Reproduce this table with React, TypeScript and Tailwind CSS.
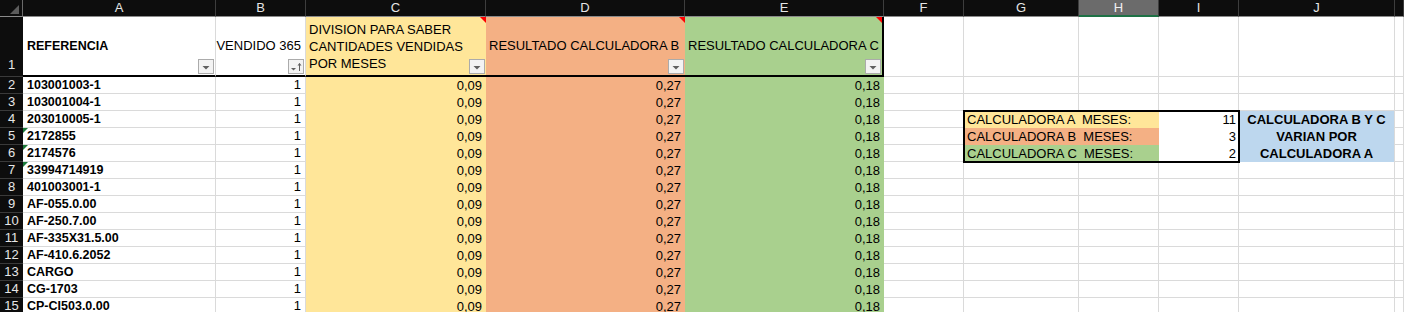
import React from 'react';

const YELLOW = 'bg-[#ffe699]';
const SALMON = 'bg-[#f4b084]';
const GREEN = 'bg-[#a9d08e]';

const LETTERS = ['A', 'B', 'C', 'D', 'E', 'F', 'G', 'H', 'I', 'J', ''];

const REFS = [
  '103001003-1',
  '103001004-1',
  '203010005-1',
  '2172855',
  '2174576',
  '33994714919',
  '401003001-1',
  'AF-055.0.00',
  'AF-250.7.00',
  'AF-335X31.5.00',
  'AF-410.6.2052',
  'CARGO',
  'CG-1703',
  'CP-CI503.0.00',
];

const TEXT_NUM = ['2172855', '2174576', '33994714919'];

function Drop({ sort }: { sort?: boolean }) {
  return (
    <div className="absolute right-[1px] bottom-[1px] w-[16px] h-[15px] border border-[#ababab] bg-[#f3f3f3] flex items-center justify-center">
      {sort ? (
        <svg width="14" height="13" viewBox="0 0 14 13">
          <path d="M2 8h5l-2.5 2.5z" fill="#606060" />
          <path d="M10.5 11V3.5" stroke="#606060" strokeWidth="1" />
          <path d="M8.5 5.5l2-2.5 2 2.5z" fill="#606060" />
        </svg>
      ) : (
        <svg width="14" height="13" viewBox="0 0 14 13">
          <path d="M3.5 6h7l-3.5 3.5z" fill="#606060" />
        </svg>
      )}
    </div>
  );
}

function RedMark() {
  return <div className="absolute top-0 right-0 w-[6px] h-[6px] bg-[#ff0000] [clip-path:polygon(0_0,100%_0,100%_100%)]" />;
}

function GreenMark() {
  return <div className="absolute top-0 left-0 w-[5px] h-[5px] bg-[#1d7a3a] [clip-path:polygon(0_0,100%_0,0_100%)]" />;
}

export default function App() {
  return (
    <div className="w-[1404px] h-[312px] overflow-hidden bg-white text-black text-[13px] font-['Liberation_Sans',Arial,sans-serif]">
      <div className="grid grid-cols-[23px_193px_90px_180px_199px_199px_80px_115px_80px_80px_156px_1fr] grid-rows-[17px_60px] auto-rows-[17px]">
        {/* column headers */}
        <div className="relative bg-[#0d0d0d] border-r border-r-[#6a6a6a] border-b border-b-[#8a8a8a]">
          <div className="absolute right-[3px] bottom-[2px] w-[9px] h-[9px] bg-[#5c5c5c] [clip-path:polygon(100%_0,100%_100%,0_100%)]" />
        </div>
        {LETTERS.map((l, i) =>
          l === 'H' ? (
            <div key={i} className="bg-[#6b6b6b] border-r border-r-[#3d3d3d] border-b-2 border-b-[#1e7145] text-[#f0f0f0] text-[13px] flex items-center justify-center">
              {l}
            </div>
          ) : (
            <div key={i} className="bg-[#0d0d0d] border-r border-r-[#3d3d3d] border-b border-b-[#8a8a8a] text-[#e6e6e6] text-[13px] flex items-center justify-center">
              {l}
            </div>
          )
        )}

        {/* row 1 */}
        <div className="bg-[#0d0d0d] border-b border-[#3a3a3a] text-[#e6e6e6] text-[13px] flex items-end justify-center pb-[2px]">1</div>
        <div className="relative border-r border-r-[#dadada] border-b-2 border-b-black flex items-center pl-[4px] font-bold text-[12.5px]">
          REFERENCIA
          <Drop />
        </div>
        <div className="relative border-r border-r-[#dadada] border-b-2 border-b-black flex items-center justify-end pr-[4px]">
          VENDIDO 365
          <Drop sort />
        </div>
        <div className={`relative ${YELLOW} border-b-2 border-b-black flex items-center pl-[3px] leading-[17px]`}>
          <div>
            DIVISION PARA SABER
            <br />
            CANTIDADES VENDIDAS
            <br />
            POR MESES
          </div>
          <RedMark />
          <Drop />
        </div>
        <div className={`relative ${SALMON} border-b-2 border-b-black flex items-center pl-[3px]`}>
          RESULTADO CALCULADORA B
          <RedMark />
          <Drop />
        </div>
        <div className={`relative ${GREEN} border-b-2 border-b-black border-r-2 border-r-black flex items-center pl-[3px]`}>
          RESULTADO CALCULADORA C
          <RedMark />
          <Drop />
        </div>
        <div className="border-r border-b border-[#dadada]" />
        <div className="border-r border-b border-[#dadada]" />
        <div className="border-r border-b border-[#dadada]" />
        <div className="border-r border-b border-[#dadada]" />
        <div className="border-r border-b border-[#dadada]" />
        <div className="border-r border-b border-[#dadada]" />

        {/* calculadora box G4:I6 */}
        <div className="relative z-10 col-start-8 col-span-3 row-start-5 row-span-3 outline-2 outline-solid outline-black -outline-offset-1 grid grid-cols-[195px_80px] grid-rows-[17px_17px_17px]">
          <div className={`${YELLOW} flex items-center pl-[3px] whitespace-pre`}>CALCULADORA A  MESES:</div>
          <div className="bg-white flex items-center justify-end pr-[3px]">11</div>
          <div className={`${SALMON} flex items-center pl-[3px] whitespace-pre`}>CALCULADORA B  MESES:</div>
          <div className="bg-white flex items-center justify-end pr-[3px]">3</div>
          <div className={`${GREEN} flex items-center pl-[3px] whitespace-pre`}>CALCULADORA C  MESES:</div>
          <div className="bg-white flex items-center justify-end pr-[3px]">2</div>
        </div>
        <div className="col-start-11 row-start-5 row-span-3 bg-[#bdd7ee] border-r border-r-[#dadada] font-bold flex items-center justify-center text-center leading-[17px]">
          <div>
            CALCULADORA B Y C
            <br />
            VARIAN POR
            <br />
            CALCULADORA A
          </div>
        </div>

        {/* data rows */}
        {REFS.map((ref, i) => {
          const row = i + 2;
          const inBox = row >= 4 && row <= 6;
          return (
            <React.Fragment key={ref}>
              <div className="bg-[#0d0d0d] border-b border-[#3a3a3a] text-[#e6e6e6] text-[13px] flex items-center justify-center">{row}</div>
              <div className="relative border-r border-b border-[#dadada] flex items-center pl-[4px] font-bold text-[12.5px]">
                {TEXT_NUM.includes(ref) && <GreenMark />}
                {ref}
              </div>
              <div className="border-r border-b border-[#dadada] flex items-center justify-end pr-[4px]">1</div>
              <div className={`${YELLOW} flex items-center justify-end pr-[4px]`}>0,09</div>
              <div className={`${SALMON} flex items-center justify-end pr-[4px]`}>0,27</div>
              <div className={`${GREEN} flex items-center justify-end pr-[4px]`}>0,18</div>
              <div className="border-r border-b border-[#dadada]" />
              {!inBox && (
                <>
                  <div className="border-r border-b border-[#dadada]" />
                  <div className="border-r border-b border-[#dadada]" />
                  <div className="border-r border-b border-[#dadada]" />
                  <div className="border-r border-b border-[#dadada]" />
                </>
              )}
              <div className="border-r border-b border-[#dadada]" />
            </React.Fragment>
          );
        })}
      </div>
    </div>
  );
}
